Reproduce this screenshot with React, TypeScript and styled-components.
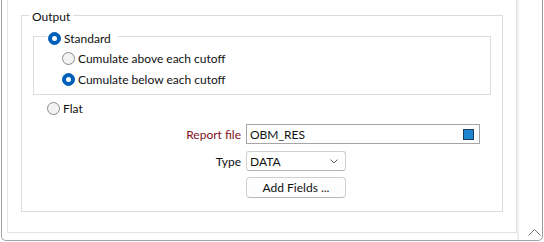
import React from 'react';
import styled, { createGlobalStyle } from 'styled-components';

const Global = createGlobalStyle`
  html, body { margin: 0; padding: 0; background: #fff; }
  body { font-family: 'Lato', 'Liberation Sans', sans-serif; font-size: 12px; color: #111; }
  * { box-sizing: border-box; }
`;

const Window = styled.div`
  width: 544px;
  height: 242px;
  overflow: hidden;
  background: #fff;
  padding-left: 1px;
`;

const Shell = styled.div`
  width: 542px;
  height: 241px;
  display: flex;
  border-left: 1px solid #a3a3a3;
  border-right: 1px solid #9c9c9c;
  border-bottom: 1px solid #a3a3a3;
  border-bottom-left-radius: 5px;
  border-bottom-right-radius: 5px;
`;

const Content = styled.div`
  flex: 1;
  display: flex;
  padding: 0 0 7px 5px;
`;

const Panel = styled.div`
  flex: 1;
  border-left: 1px solid #e3e3e3;
  border-right: 1px solid #e3e3e3;
  border-bottom: 1px solid #e3e3e3;
  padding: 8px 13px 19px 13px;
`;

const ScrollBar = styled.div`
  width: 25px;
  border-left: 2px solid #efefef;
  display: flex;
  flex-direction: column;
  justify-content: flex-end;
  align-items: center;
  padding: 0 0 4px 7px;
`;

const Group = styled.fieldset<{ $inset?: boolean }>`
  margin: ${p => (p.$inset ? '6px 11px 0 11px' : '0')};
  padding: 0;
  min-width: 0;
  border: 1px solid #dcdcdc;
`;

const Legend = styled.legend<{ $radio?: boolean }>`
  height: 15px;
  line-height: 15px;
  padding: ${p => (p.$radio ? '3px 7px 0 1px' : '1px 3px 0 3px')};
  margin-left: ${p => (p.$radio ? '13px' : '7px')};
  display: flex;
  align-items: center;
  gap: 3px;
`;

const OutputBody = styled.div`
  padding-bottom: 13px;
`;

const StandardBody = styled.div`
  padding: 4px 0 4px 28px;
`;

const RadioRow = styled.label<{ $indent?: number; $top?: number }>`
  display: flex;
  align-items: center;
  gap: 3px;
  height: 21px;
  padding-left: ${p => p.$indent ?? 0}px;
  margin-top: ${p => p.$top ?? 0}px;
`;

const Radio = styled.span<{ $on?: boolean }>`
  width: 13px;
  height: 13px;
  border-radius: 50%;
  flex: none;
  display: flex;
  align-items: center;
  justify-content: center;
  background: ${p => (p.$on ? '#005fb8' : '#f3f3f3')};
  border: 1px solid ${p => (p.$on ? '#005fb8' : '#8a8a8a')};
  &::after {
    content: '';
    display: ${p => (p.$on ? 'block' : 'none')};
    width: 5px;
    height: 5px;
    border-radius: 50%;
    background: #fff;
  }
`;

const Form = styled.div`
  margin-top: 5px;
  display: flex;
  flex-direction: column;
`;

const FormRow = styled.div<{ $top?: number }>`
  display: flex;
  align-items: center;
  margin-top: ${p => p.$top ?? 0}px;
`;

const Label = styled.span<{ $accent?: boolean }>`
  width: 219px;
  margin-right: 5px;
  text-align: right;
  color: ${p => (p.$accent ? '#7e1025' : '#111')};
`;

const TextBox = styled.div`
  width: 234px;
  height: 20px;
  border: 1px solid #a6a6a6;
  display: flex;
  align-items: center;
  justify-content: space-between;
  padding: 0 5px 0 3px;
`;

const ColorSwatch = styled.span`
  width: 11px;
  height: 11px;
  background: #1f87d0;
  border: 1px solid #1d3d5c;
`;

const Select = styled.div`
  width: 100px;
  height: 20px;
  border: 1px solid #d0d0d0;
  border-bottom-color: #b8b8b8;
  border-radius: 3px;
  display: flex;
  align-items: center;
  justify-content: space-between;
  padding: 0 7px 0 3px;
`;

const Button = styled.button`
  width: 100px;
  height: 21px;
  margin-left: 224px;
  border: 1px solid #d0d0d0;
  border-bottom-color: #b8b8b8;
  border-radius: 4px;
  background: #fdfdfd;
  font: inherit;
  color: #111;
  padding: 0;
`;

export default function App() {
  return (
    <Window>
      <Global />
      <Shell>
        <Content>
          <Panel>
            <Group>
              <Legend>Output</Legend>
              <OutputBody>
                <Group $inset>
                  <Legend $radio>
                    <Radio $on />
                    Standard
                  </Legend>
                  <StandardBody>
                    <RadioRow>
                      <Radio />
                      Cumulate above each cutoff
                    </RadioRow>
                    <RadioRow>
                      <Radio $on />
                      Cumulate below each cutoff
                    </RadioRow>
                  </StandardBody>
                </Group>
                <RadioRow $indent={25} $top={3}>
                  <Radio />
                  Flat
                </RadioRow>
                <Form>
                  <FormRow>
                    <Label $accent>Report file</Label>
                    <TextBox>
                      <span>OBM_RES</span>
                      <ColorSwatch />
                    </TextBox>
                  </FormRow>
                  <FormRow $top={7}>
                    <Label>Type</Label>
                    <Select>
                      <span>DATA</span>
                      <svg width="8" height="5" viewBox="0 0 8 5">
                        <path d="M0.5 0.5 L4 4 L7.5 0.5" fill="none" stroke="#5f5f5f" strokeWidth="1" />
                      </svg>
                    </Select>
                  </FormRow>
                  <FormRow $top={6}>
                    <Button>Add Fields ...</Button>
                  </FormRow>
                </Form>
              </OutputBody>
            </Group>
          </Panel>
        </Content>
        <ScrollBar>
          <svg width="13" height="7" viewBox="0 0 13 7">
            <path d="M0.5 6.5 L6.5 0.5 L12.5 6.5" fill="none" stroke="#7a7a7a" strokeWidth="1" />
          </svg>
        </ScrollBar>
      </Shell>
    </Window>
  );
}
